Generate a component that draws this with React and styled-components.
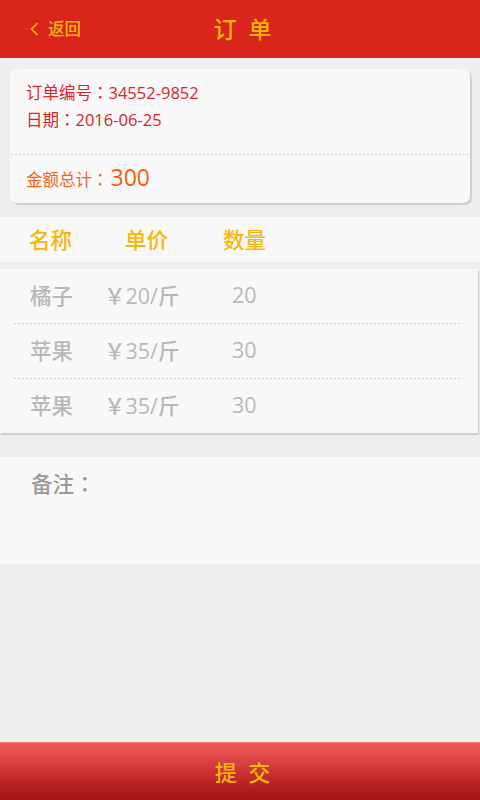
import React from "react";
import styled, { createGlobalStyle } from "styled-components";

const Global = createGlobalStyle`
  html, body { margin: 0; padding: 0; background: #eeeeee; }
  body { font-family: "Open Sans", "Noto Sans CJK SC", sans-serif; font-weight: 500; }
  * { box-sizing: border-box; }
`;

const Page = styled.div`
  min-height: 100vh;
  display: flex;
  flex-direction: column;
  background: #eeeeee;
`;

const Header = styled.header`
  height: 58px;
  background: #da251d;
  display: grid;
  grid-template-columns: 1fr auto 1fr;
  align-items: center;
  color: #f6b60a;
`;

const Back = styled.div`
  display: flex;
  align-items: center;
  gap: 9px;
  padding-left: 30px;
  font-size: 16.5px;
  line-height: 20px;
  margin-top: -1px;
`;

const Title = styled.div`
  font-size: 23px;
  letter-spacing: 3px;
  padding-left: 8px;
  margin-top: -2px;
`;

const Content = styled.main`
  flex: 1;
  display: flex;
  flex-direction: column;
`;

const InfoCard = styled.section`
  margin: 11px 10px 0 10px;
  background: #f8f8f8;
  border-radius: 7px;
  box-shadow: 2px 2px 1px #cfcfcf;
  font-weight: 400;
`;

const InfoTop = styled.div`
  padding: 10px 16px 21px;
  color: #d9252a;
  font-size: 16.5px;
  line-height: 27px;
`;

const Colon = styled.span`
  font-family: "Noto Sans CJK JP", sans-serif;
`;

const Dotted = styled.div`
  height: 1px;
  margin: ${(p) => p.$margin || "0"};
  background-image: repeating-linear-gradient(
    to right,
    #d0d0d0 0 2px,
    transparent 2px 4px
  );
`;

const Total = styled.div`
  height: 48px;
  display: flex;
  align-items: center;
  padding-left: 16px;
  color: #f2661a;
  font-size: 16.5px;
`;

const TotalValue = styled.span`
  font-size: 23px;
  color: #ff5a05;
  margin-top: -5px;
  margin-left: 2px;
`;

const HeadRow = styled.div`
  margin-top: 14px;
  height: 45px;
  background: #f8f8f8;
  display: flex;
  align-items: center;
  color: #f6b60a;
  font-size: 21.5px;
  padding-bottom: 2px;
`;

const Cell = styled.span`
  width: ${(p) => p.$w}px;
  flex: none;
  padding-left: ${(p) => p.$pl || 0}px;
`;

const Table = styled.section`
  margin-top: 7px;
  margin-right: 2px;
  background: #f8f8f8;
  box-shadow: 1px 2px 1px #d0d0d0;
`;

const Row = styled.div`
  height: 54px;
  display: flex;
  align-items: center;
  color: #b8b8b8;
  font-size: 21.5px;
  padding-bottom: 4px;
`;

const Remark = styled.section`
  margin-top: 24px;
  height: 107px;
  background: #f8f8f8;
  padding: 11px 0 0 31px;
  color: #9a9a9a;
  font-size: 21.5px;
  line-height: 30px;
`;

const Submit = styled.button`
  height: 58px;
  width: 100%;
  border: none;
  border-top: 1px solid #f27a7a;
  background: linear-gradient(to bottom, #f05858 0%, #e04848 25%, #c42a2a 60%, #a11414 100%);
  color: #f6b60a;
  font-family: inherit;
  font-weight: 500;
  font-size: 22px;
  letter-spacing: 3px;
  padding: 0 0 2px 8px;
`;

const rows = [
  ["橘子", "￥20/斤", "20"],
  ["苹果", "￥35/斤", "30"],
  ["苹果", "￥35/斤", "30"],
];

export default function App() {
  return (
    <Page>
      <Global />
      <Header>
        <Back>
          <svg width="9" height="14" viewBox="0 0 9 14">
            <path d="M7.5 1 L1.5 7 L7.5 13" fill="none" stroke="#f6b60a" strokeWidth="1.6" />
          </svg>
          <span>返回</span>
        </Back>
        <Title>订 单</Title>
        <div />
      </Header>
      <Content>
        <InfoCard>
          <InfoTop>
            <div>订单编号<Colon>：</Colon>34552-9852</div>
            <div>日期<Colon>：</Colon>2016-06-25</div>
          </InfoTop>
          <Dotted $margin="0 1px" />
          <Total>
            金额总计<Colon>：</Colon><TotalValue>300</TotalValue>
          </Total>
        </InfoCard>
        <HeadRow>
          <Cell $w={125} $pl={29}>名称</Cell>
          <Cell $w={98}>单价</Cell>
          <Cell $w={80}>数量</Cell>
        </HeadRow>
        <Table>
          {rows.map((r, i) => (
            <React.Fragment key={i}>
              {i > 0 && <Dotted $margin="0 15px 0 14px" />}
              <Row>
                <Cell $w={104} $pl={30}>{r[0]}</Cell>
                <Cell $w={128}>{r[1]}</Cell>
                <Cell $w={80}>{r[2]}</Cell>
              </Row>
            </React.Fragment>
          ))}
        </Table>
        <Remark>备注<Colon>：</Colon></Remark>
      </Content>
      <Submit>提 交</Submit>
    </Page>
  );
}
